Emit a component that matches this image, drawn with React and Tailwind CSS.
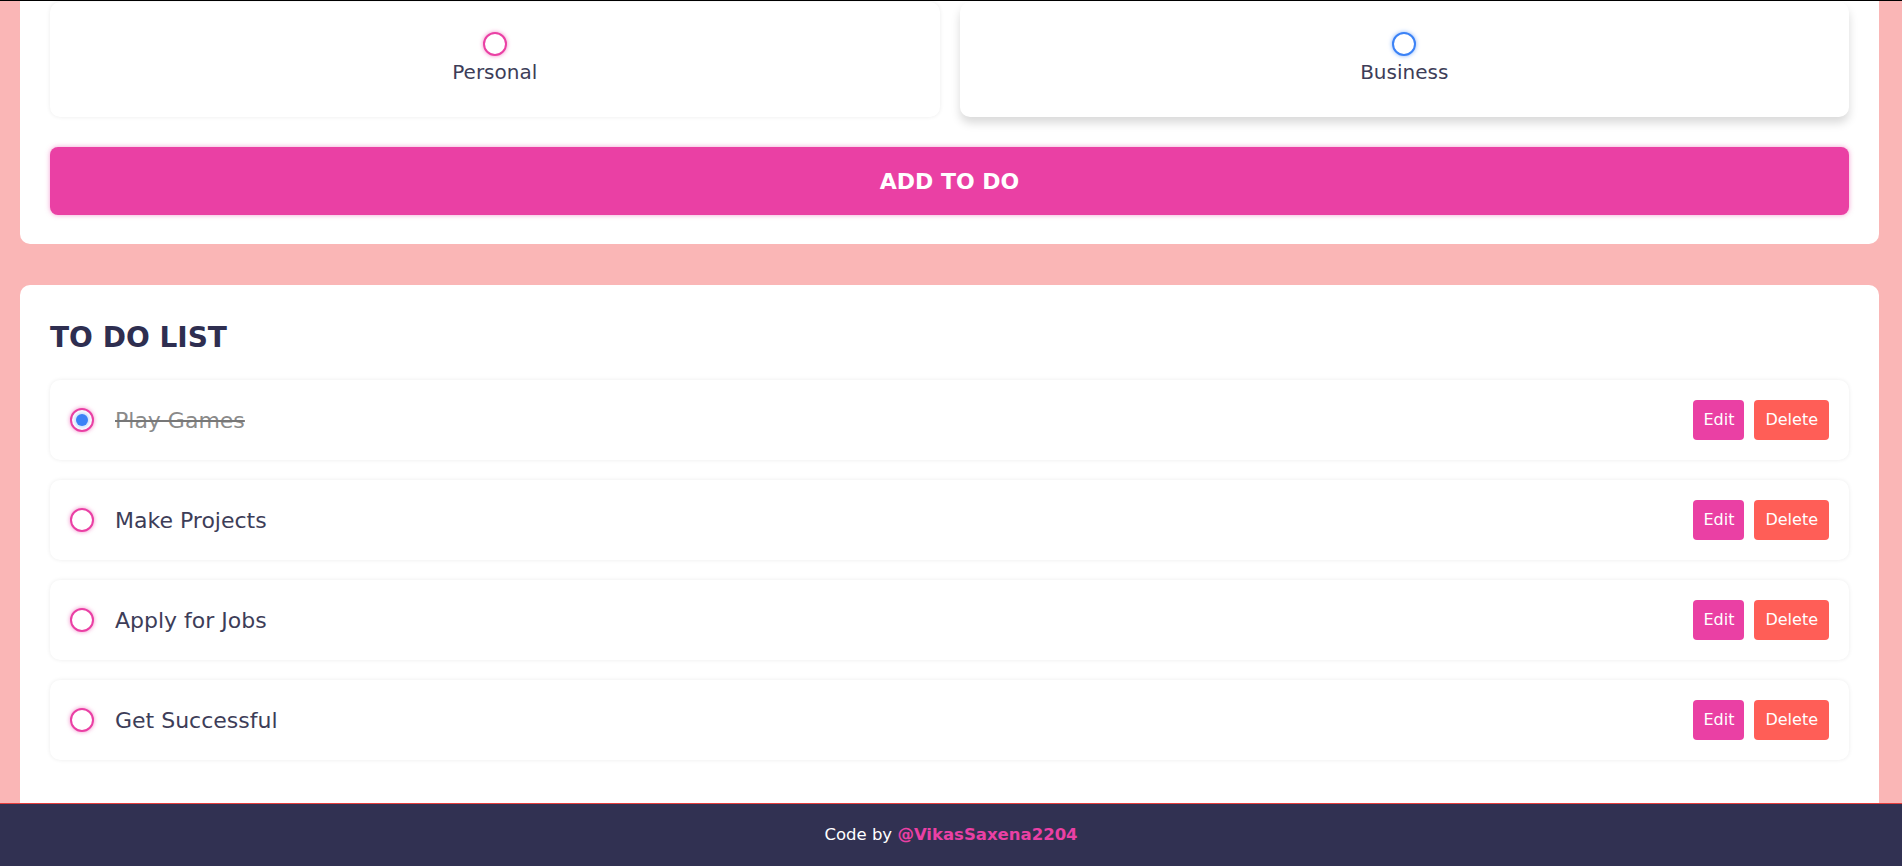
import React from 'react';

const todos = [
  { id: 1, text: 'Play Games', done: true },
  { id: 2, text: 'Make Projects', done: false },
  { id: 3, text: 'Apply for Jobs', done: false },
  { id: 4, text: 'Get Successful', done: false },
];

function Bubble({ color = 'pink', checked = false }) {
  const ring =
    color === 'blue'
      ? 'border-[#3b82f6] shadow-[0_0_4px_rgba(59,130,246,0.6)]'
      : 'border-[#ea40a4] shadow-[0_0_4px_rgba(234,64,164,0.6)]';
  return (
    <span className={`flex h-6 w-6 shrink-0 items-center justify-center rounded-full border-2 bg-white ${ring}`}>
      {checked && <span className="h-3 w-3 rounded-full bg-[#3b82f6] shadow-[0_0_3px_2px_rgba(59,130,246,0.25)]" />}
    </span>
  );
}

export default function App() {
  return (
    <div className="flex h-screen flex-col overflow-hidden border-t border-black bg-[#fab6b6] font-['DejaVu_Sans',sans-serif]">
      <main className="flex-1 overflow-hidden pl-5 pr-[23px]">
        {/* Create todo card (scrolled) */}
        <section className="rounded-b-[10px] bg-white px-[30px] pb-[29px] pt-px">
          <div className="grid grid-cols-2 gap-5">
            <label className="flex flex-col items-center gap-[4px] rounded-[10px] bg-white pt-[30px] pb-[33px] shadow-[0_0_4px_rgba(0,0,0,0.08)]">
              <Bubble color="pink" />
              <span className="text-[20px] leading-6 text-[#3d3d58]">Personal</span>
            </label>
            <label className="flex flex-col items-center gap-[4px] rounded-[10px] bg-white pt-[30px] pb-[33px] shadow-[0_6px_10px_rgba(0,0,0,0.15)]">
              <Bubble color="blue" />
              <span className="text-[20px] leading-6 text-[#3d3d58]">Business</span>
            </label>
          </div>
          <button className="mt-[30px] flex h-[68px] w-full items-center justify-center rounded-[8px] bg-[#ea40a4] text-[22px] font-bold uppercase text-white shadow-[0_0_5px_rgba(234,64,164,0.5)]">
            Add to do
          </button>
        </section>

        {/* Todo list */}
        <section className="mt-[41px] rounded-[10px] bg-white px-[30px] pt-9 pb-[80px]">
          <h3 className="text-[28px] font-bold leading-[34px] text-[#2e2e50]">TO DO LIST</h3>
          <div className="mt-[25px] flex flex-col gap-5">
            {todos.map((t) => (
              <div
                key={t.id}
                className="flex h-20 items-center rounded-[10px] bg-white px-5 shadow-[0_0_4px_rgba(0,0,0,0.08)]"
              >
                <Bubble checked={t.done} />
                <span
                  className={`ml-[21px] flex-1 text-[22px] ${
                    t.done ? 'text-[#8a8a8a] line-through decoration-[#777]' : 'text-[#3d3d58]'
                  }`}
                >
                  {t.text}
                </span>
                <div className="flex gap-[10px]">
                  <button className="h-10 rounded-[4px] bg-[#ea40a4] px-[10px] text-[16px] text-white">Edit</button>
                  <button className="h-10 rounded-[4px] bg-[#ff5e57] px-[11px] text-[16px] text-white">Delete</button>
                </div>
              </div>
            ))}
          </div>
        </section>
      </main>

      <footer className="flex h-[63px] shrink-0 items-center justify-center border-t border-[#e53e3e] bg-[#313152] text-[16.5px] text-white">
        Code by&nbsp;<span className="font-bold text-[#ea40a4]">@VikasSaxena2204</span>
      </footer>
    </div>
  );
}
